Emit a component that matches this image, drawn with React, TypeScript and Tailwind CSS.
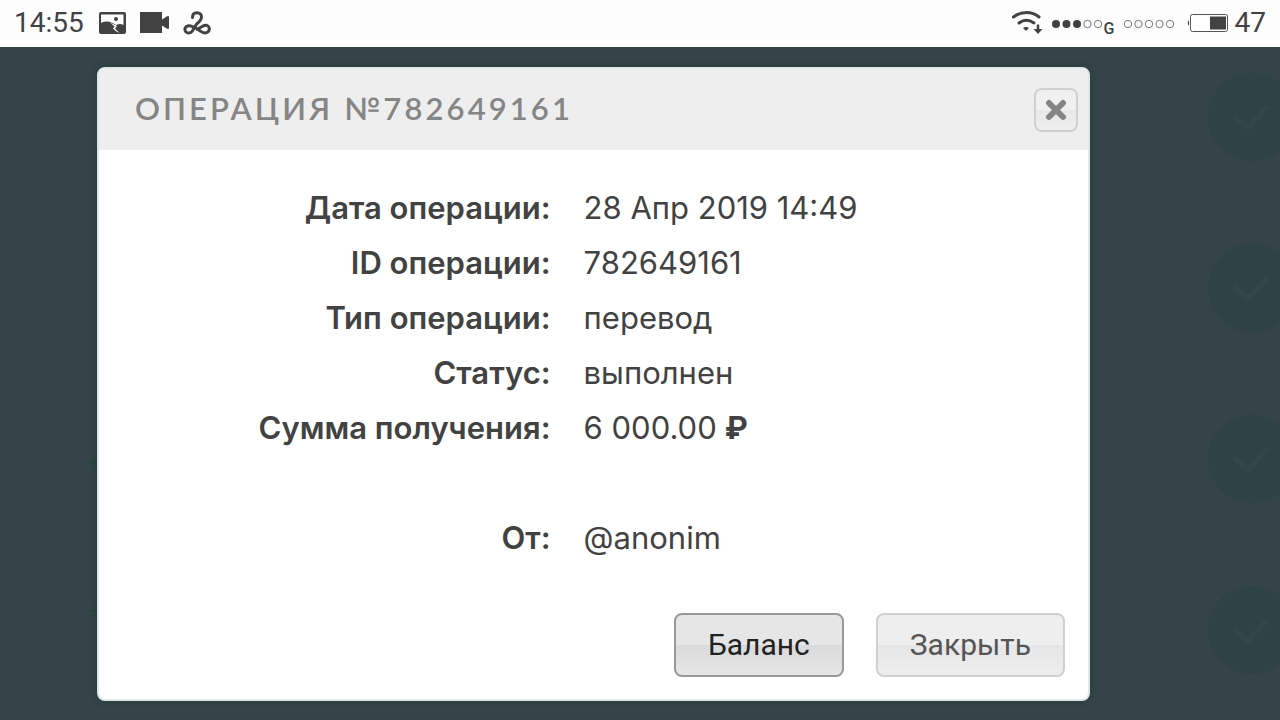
import React from "react";

const details = [
   { label: "Дата операции:", value: "28 Апр 2019 14:49" },
   { label: "ID операции:", value: "782649161" },
   { label: "Тип операции:", value: "перевод" },
   { label: "Статус:", value: "выполнен" },
   { label: "Сумма получения:", value: "6 000.00", currency: "₽" },
];

const history = [
   { id: 1, mark: "" },
   { id: 2, mark: "" },
   { id: 3, mark: "pt-[30px]" },
   { id: 4, mark: "pt-2" },
];

function StatusBar() {
   return (
      <header className="flex h-[47px] items-center justify-between bg-[#fdfdfd] pr-3.5 pb-0.5 pl-3.5 font-['Roboto',sans-serif] text-[28px] leading-8 text-[#424242]">
         <div className="flex items-center gap-3.5">
            <span>14:55</span>
            <svg width="28" height="22" viewBox="0 0 28 22" aria-hidden="true">
               <rect x="1" width="27" height="22" rx="2" fill="#424242" />
               <path d="M3 11V2.500h22.500V13c-2.500-1.500-4.500-1.500-7.500 0-3.500-2-6-3.500-9-3.500-2.500 0-4 .5-6 1.500z" fill="#fdfdfd" />
               <circle cx="18" cy="7" r="2" fill="#424242" />
               <path d="M12 10.500l7 3.500-2 2.500 4.500 4.500c-2-.5-5-3-6.500-4.500l1.500-2z" fill="#fdfdfd" />
            </svg>
            <svg width="29" height="21" viewBox="0 0 29 21" aria-hidden="true">
               <path d="M0 0h22v7.500l5-3.200h2v12.400h-2l-5-3.200V21H0z" fill="#424242" />
            </svg>
            <svg width="28" height="24" viewBox="0 0 28 24" fill="none" stroke="#424242" strokeWidth="3" strokeLinecap="round" aria-hidden="true">
               <path d="M9.500 6.500C9.500 3.500 11.300 1.700 14 1.700s4.500 1.800 4.500 4.300c0 3-2.500 5-5 7.300l-4.300 7c-1.500 2.300-5 2.200-6.500.3-1.700-2.300-.4-5.600 2.600-5.900 4-.4 7.700 2.500 11.700 5.200 2.700 2 6 2.700 8.200.7 1.900-2 1.300-5.400-1.300-6.300-3.200-1-6 2.200-9.700 4" />
            </svg>
         </div>
         <div className="flex items-center">
            <svg width="31" height="25" viewBox="0 0 31 25" fill="none" stroke="#424242" aria-hidden="true">
               <path d="M1.500 7C9 1 20 1 27 7" strokeWidth="3" strokeLinecap="round" />
               <path d="M7 13c4.500-3.500 10-3.500 15 0" strokeWidth="3" strokeLinecap="round" />
               <path d="M11 18c2-1.300 4.200-1.300 6 0l-3 3z" fill="#424242" stroke="none" />
               <path d="M26 14.500v5" strokeWidth="2.500" />
               <path d="M21.500 19h9L26 24z" fill="#424242" stroke="none" />
            </svg>
            <svg className="mt-0.5 ml-2" width="52" height="10" viewBox="0 0 52 10" aria-hidden="true">
               <circle cx="5" cy="5" r="4" fill="#424242" />
               <circle cx="15.500" cy="5" r="4" fill="#424242" />
               <circle cx="26" cy="5" r="4" fill="#424242" />
               <circle cx="36.500" cy="5" r="3.700" fill="none" stroke="#777777" />
               <circle cx="47" cy="5" r="3.700" fill="none" stroke="#777777" />
            </svg>
            <span className="pt-3 pl-px text-base leading-4 font-medium">G</span>
            <svg className="mt-0.5 ml-2" width="52" height="10" viewBox="0 0 52 10" fill="none" stroke="#777777" aria-hidden="true">
               <circle cx="5" cy="5" r="3.700" />
               <circle cx="15.500" cy="5" r="3.700" />
               <circle cx="26" cy="5" r="3.700" />
               <circle cx="36.500" cy="5" r="3.700" />
               <circle cx="47" cy="5" r="3.700" />
            </svg>
            <svg className="mr-[7px] ml-3" width="41" height="18" viewBox="0 0 41 18" aria-hidden="true">
               <path d="M2 6q-2.500 3 0 6z" fill="#424242" />
               <rect x="3.500" y=".5" width="37" height="17" rx="2" fill="#ffffff" stroke="#555555" />
               <rect x="23" y="2.500" width="16" height="13" fill="#424242" />
            </svg>
            <span>47</span>
         </div>
      </header>
   );
}

function HistoryList() {
   return (
      <ul className="-mt-1.5" aria-hidden="true">
         {history.map((row) => (
            <li key={row.id} className="flex h-[171px] justify-between border-b border-[#324246] pt-8">
               <span className={`pl-[85px] text-2xl text-[#25463f] ${row.mark}`}>{row.mark && "+"}</span>
               <svg className="-mr-4 shrink-0" width="88" height="88" viewBox="0 0 88 88">
                  <circle cx="44" cy="44" r="44" fill="#2f4246" />
                  <path d="M26 43l14 12 20-22" fill="none" stroke="#33464a" strokeWidth="5" />
               </svg>
            </li>
         ))}
      </ul>
   );
}

export default function App() {
   return (
      <div className="flex h-screen flex-col overflow-hidden bg-[#344448] font-['Inter',sans-serif]">
         <StatusBar />
         <main className="relative flex-1 overflow-hidden">
            <HistoryList />

            <div className="absolute inset-0 pt-5 pr-[190px] pl-[97px]">
               <section
                  role="dialog"
                  aria-labelledby="dialog-title"
                  className="overflow-hidden rounded-lg border-2 border-[#dfe6e6] bg-white shadow-[0_0_6px_#263a3c]"
               >
                  <div className="flex h-[81px] items-center justify-between bg-[#eeeeee] pr-2.5 pl-9">
                     <h1 id="dialog-title" className="pb-1 font-['Lato',sans-serif] text-[31px] leading-10 font-semibold tracking-widest text-[#858585]">
                        ОПЕРАЦИЯ №782649161
                     </h1>
                     <button
                        type="button"
                        aria-label="Закрыть окно"
                        className="flex size-11 items-center justify-center rounded-lg border-2 border-[#d0d0d0] bg-linear-to-b from-[#f0f0f0] from-50% via-[#e8e8e8] via-50% to-[#eeeeee]"
                     >
                        <svg width="22" height="22" viewBox="0 0 22 22" stroke="#858585" strokeWidth="6" strokeLinecap="round">
                           <path d="M4 4l14 14M18 4L4 18" />
                        </svg>
                     </button>
                  </div>

                  <table className="mt-[30px] w-full table-fixed text-[31px] leading-[55px] text-[#424242]">
                     <tbody>
                        {details.map((item) => (
                           <tr key={item.label} className="h-[55px]">
                              <th scope="row" className="w-[49%] pr-[33px] text-right font-semibold whitespace-nowrap">
                                 {item.label}
                              </th>
                              <td className="whitespace-nowrap">
                                 {item.value}
                                 {item.currency && <b className="ml-2">{item.currency}</b>}
                              </td>
                           </tr>
                        ))}
                        <tr className="h-[110px] align-bottom">
                           <th scope="row" className="pr-[33px] text-right font-semibold">
                              От:
                           </th>
                           <td>@anonim</td>
                        </tr>
                     </tbody>
                  </table>

                  <div className="flex justify-end gap-8 pt-12 pr-[23px] pb-[22px] font-['Roboto',sans-serif] text-[30px]">
                     <button
                        type="button"
                        className="h-16 rounded-lg border-2 border-[#999999] bg-linear-to-b from-[#e6e6e6] from-50% via-[#dadada] via-50% to-[#e6e6e6] px-8 pb-0.5 text-[#222222]"
                     >
                        Баланс
                     </button>
                     <button
                        type="button"
                        className="h-16 rounded-lg border-2 border-[#d0d0d0] bg-linear-to-b from-[#eeeeee] from-50% via-[#e6e6e6] via-50% to-[#eeeeee] px-8 pb-0.5 text-[#555555]"
                     >
                        Закрыть
                     </button>
                  </div>
               </section>
            </div>
         </main>
      </div>
   );
}
